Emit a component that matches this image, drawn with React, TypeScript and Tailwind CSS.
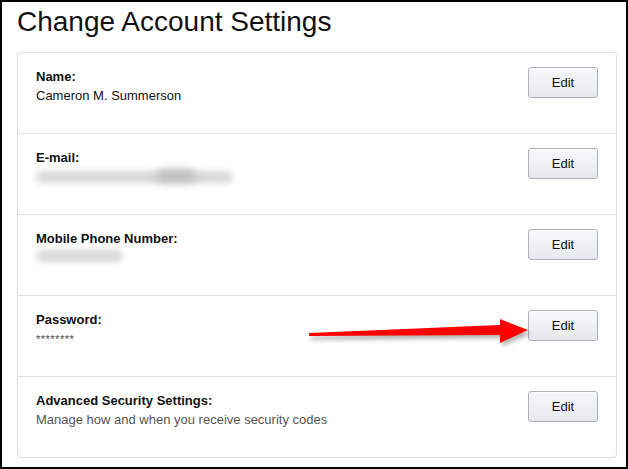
import React from 'react';

type Row = {
  label: string;
  value: React.ReactNode;
};

function EditButton() {
  return (
    <button
      type="button"
      className="h-[31px] w-[70px] shrink-0 rounded-[3px] border border-[#adb1b8] bg-gradient-to-b from-[#f7f8fa] to-[#e7e9ec] text-[13px] text-[#111] shadow-[0_1px_0_rgba(255,255,255,0.6)_inset]"
    >
      Edit
    </button>
  );
}

function Blurred({ width, dark }: { width: number; dark?: boolean }) {
  return (
    <span className="relative inline-block h-[19px] align-top" style={{ width }}>
      <span className="absolute left-[5px] right-[5px] top-[4px] h-[12px] rounded-full bg-[#d9d9d9] blur-[3px]" />
      {dark && (
        <span className="absolute left-[125px] top-[3px] h-[12px] w-[40px] rounded-full bg-[#bdbdbd] blur-[4px]" />
      )}
    </span>
  );
}

const rows: Row[] = [
  { label: 'Name:', value: <span className="text-[#111]">Cameron M. Summerson</span> },
  { label: 'E-mail:', value: <span className="-ml-[5px]"><Blurred width={207} dark /></span> },
  { label: 'Mobile Phone Number:', value: <span className="-ml-[5px] -mt-[2px] block"><Blurred width={97} /></span> },
  { label: 'Password:', value: <span className="text-[11px] tracking-[0.5px] text-[#444]">********</span> },
  {
    label: 'Advanced Security Settings:',
    value: <span className="text-[#555]">Manage how and when you receive security codes</span>,
  },
];

function Arrow() {
  return (
    <svg
      className="pointer-events-none absolute left-0 top-0"
      width="628"
      height="469"
      viewBox="0 0 628 469"
    >
      <defs>
        <filter id="sh" x="-10%" y="-50%" width="120%" height="200%">
          <feGaussianBlur stdDeviation="2" />
        </filter>
      </defs>
      <polygon
        points="309,335 500,326 500,321 529,332 500,344 500,336 309,338"
        fill="rgba(0,0,0,0.3)"
        filter="url(#sh)"
      />
      <polygon
        points="307,331 498,323 498,317 526,328 498,341 498,333 307,334"
        fill="#ff0000"
      />
    </svg>
  );
}

export default function App() {
  return (
    <div
      className="relative h-[469px] w-[628px] overflow-hidden border-2 border-black bg-white"
      style={{ fontFamily: '"Liberation Sans", Arial, sans-serif' }}
    >
      <h1 className="pl-[15px] pt-[2px] text-[28px] font-normal leading-[36px] text-[#111]">
        Change Account Settings
      </h1>
      <div className="ml-[15px] mt-[12px] w-[600px] rounded-[4px] border border-[#dddddd]">
        {rows.map((r, i) => (
          <div
            key={r.label}
            className={
              i < rows.length - 1
                ? 'flex h-[81px] items-start justify-between border-b border-[#e3e3e3] pl-[18px] pr-[18px] pt-[14px]'
                : 'flex h-[80px] items-start justify-between pl-[18px] pr-[18px] pt-[14px]'
            }
          >
            <div className="text-[13px] leading-[19px]">
              <div className="font-bold text-[#111]">{r.label}</div>
              <div>{r.value}</div>
            </div>
            <EditButton />
          </div>
        ))}
      </div>
      <Arrow />
    </div>
  );
}
